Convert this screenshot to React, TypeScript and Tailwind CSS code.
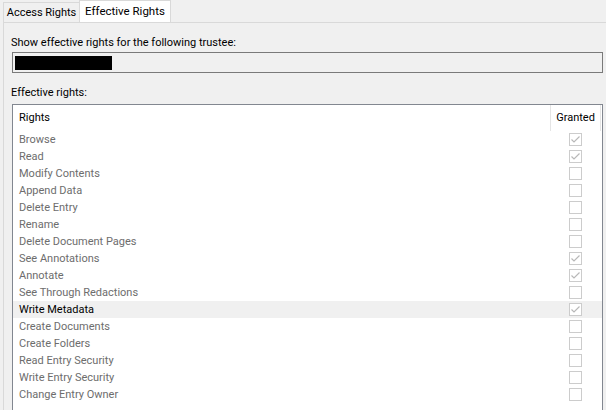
import React from 'react'

const rights: { name: string; granted: boolean; active?: boolean }[] = [
  { name: 'Browse', granted: true },
  { name: 'Read', granted: true },
  { name: 'Modify Contents', granted: false },
  { name: 'Append Data', granted: false },
  { name: 'Delete Entry', granted: false },
  { name: 'Rename', granted: false },
  { name: 'Delete Document Pages', granted: false },
  { name: 'See Annotations', granted: true },
  { name: 'Annotate', granted: true },
  { name: 'See Through Redactions', granted: false },
  { name: 'Write Metadata', granted: true, active: true },
  { name: 'Create Documents', granted: false },
  { name: 'Create Folders', granted: false },
  { name: 'Read Entry Security', granted: false },
  { name: 'Write Entry Security', granted: false },
  { name: 'Change Entry Owner', granted: false },
]

function Check({ on }: { on: boolean }) {
  return (
    <div className="w-[13px] h-[13px] border border-[#cccccc] bg-white flex items-center justify-center">
      {on && (
        <svg width="11" height="11" viewBox="0 0 11 11">
          <path d="M1.5 5.5 L4 8 L9.5 2.5" fill="none" stroke="#b8b8b8" strokeWidth="1.2" />
        </svg>
      )}
    </div>
  )
}

export default function App() {
  return (
    <div className="w-[606px] h-[410px] overflow-hidden bg-[#f0f0f0] text-[11px] text-black font-['Roboto','Liberation_Sans',sans-serif]">
      {/* tab strip */}
      <div className="flex items-end h-[22px] pl-[3px]">
        <div className="h-[20px] w-[77px] border border-b-0 border-[#d9d9d9] bg-[#f0f0f0] flex items-center justify-center pt-[2px] whitespace-nowrap">
          Access Rights
        </div>
        <div className="h-[22px] w-[92px] border border-b-0 border-[#d9d9d9] bg-white flex items-center justify-center -ml-px whitespace-nowrap text-[11.5px]">
          Effective Rights
        </div>
      </div>

      {/* tab page */}
      <div className="ml-[3px] h-[388px] border-l border-t border-[#d9d9d9] pl-[7px] pr-[3px]">
        <div className="pt-[12px] leading-[16px] whitespace-nowrap">Show effective rights for the following trustee:</div>
        <div className="mt-[1px] h-[21px] border border-[#7a7a7a] bg-[#f0f0f0] ml-px flex items-center pl-[2px]">
          <div className="w-[97px] h-[14px] bg-black" />
        </div>
        <div className="mt-[12px] leading-[16px]">Effective rights:</div>
        <div className="mt-[3px] ml-px h-[320px] border border-[#828790] bg-white">
          <div className="flex h-[26px] items-center">
            <div className="flex-1 pl-[6px] pt-[1px]">Rights</div>
            <div className="w-[51px] h-full border-l border-r border-[#e5e5e5] flex items-center justify-center pt-[1px]">
              Granted
            </div>
            <div className="w-px" />
          </div>
          {rights.map((r) => (
            <div
              key={r.name}
              className={`flex h-[17px] items-center ${r.active ? 'bg-[#f0f0f0] text-black' : 'text-[#6d6d6d]'}`}
            >
              <div className="flex-1 pl-[6px] leading-[17px] whitespace-nowrap">{r.name}</div>
              <div className="w-[51px] flex justify-center pl-[1px]">
                <Check on={r.granted} />
              </div>
              <div className="w-[2px]" />
            </div>
          ))}
        </div>
      </div>
    </div>
  )
}
